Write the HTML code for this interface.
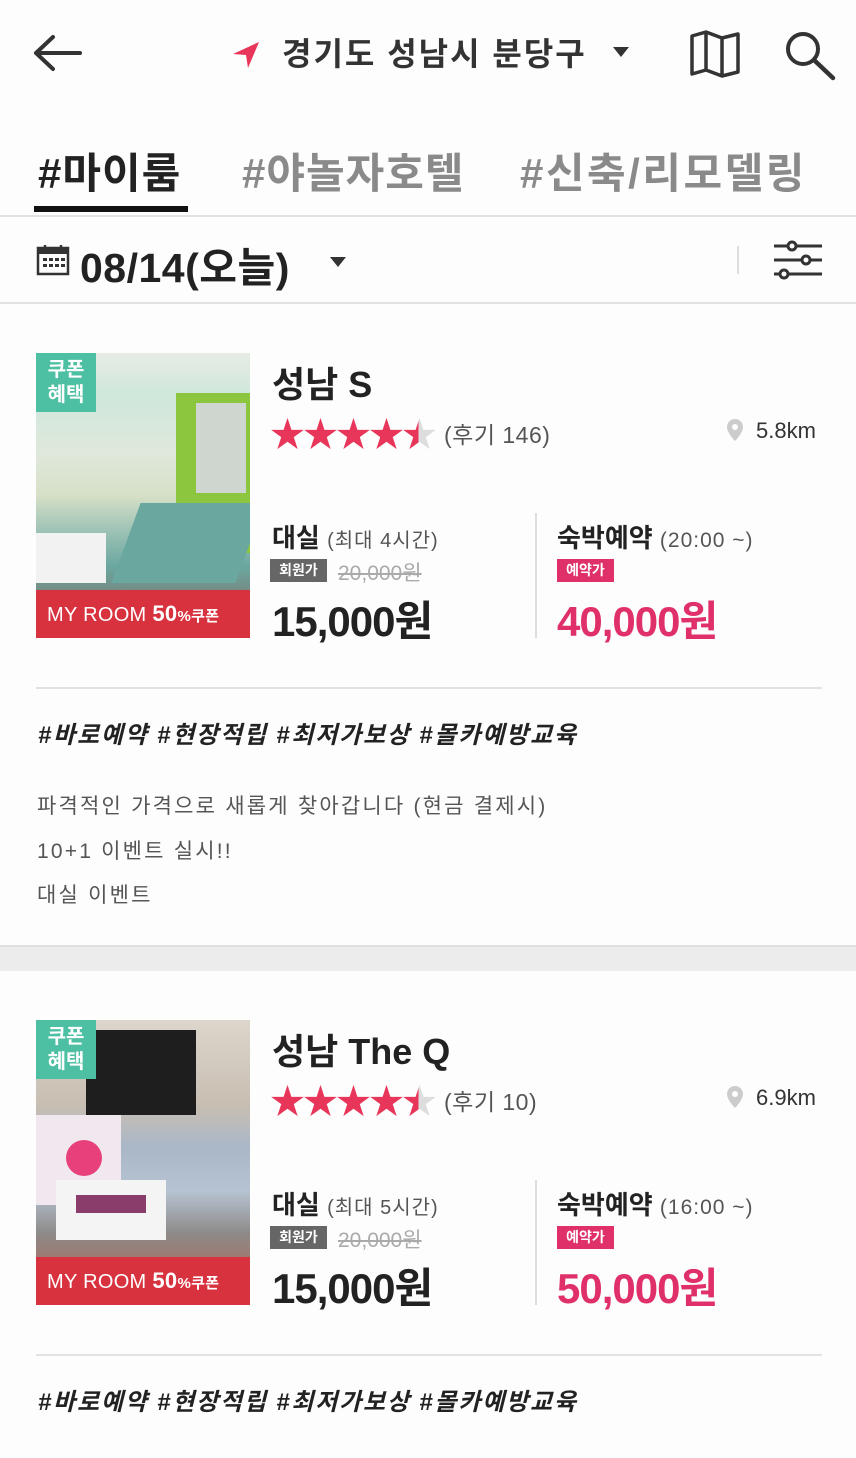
<!DOCTYPE html>
<html><head><meta charset="utf-8"><style>
*{margin:0;padding:0;box-sizing:border-box}
body{width:856px;height:1458px;overflow:hidden;background:#fdfdfd;font-family:"Liberation Sans","Noto Sans CJK KR",sans-serif;color:#222;position:relative}
.a{position:absolute;white-space:nowrap}
.hl{position:absolute;left:0;width:856px;height:2px;background:#e2e2e2}
.img{position:absolute;left:36px;width:214px;height:285px;overflow:hidden}
.cp{position:absolute;left:0;top:0;width:60px;height:59px;background:#4dbfa3;color:#fff;font-size:20px;font-weight:bold;line-height:25px;text-align:center;padding-top:5px}
.band{position:absolute;left:0;bottom:0;width:214px;height:48px;background:#d8323f;color:#fff;font-size:20px;line-height:48px;padding-left:11px;letter-spacing:.3px}
.band b{font-size:22px}
.band small{font-size:15px;font-weight:bold}
.name{font-size:36px;font-weight:bold;color:#222}
.stars{font-size:35px;color:#e8365a;letter-spacing:-2px}
.gray{color:#555}
.badge{position:absolute;height:23px;font-size:14px;font-weight:bold;color:#fff;line-height:23px;text-align:center;width:57px}
.tags{font-size:24px;font-weight:bold;font-style:italic;color:#222;letter-spacing:1.8px}
.desc{font-size:21px;color:#555;letter-spacing:2.2px}
.sub{font-size:20px;font-weight:normal;color:#555;letter-spacing:1px}
</style></head><body>

<!-- header -->
<svg class="a" style="left:33px;top:33px" width="50" height="40" viewBox="0 0 50 40"><path d="M3 20H47M3 20L20 4M3 20L20 36" stroke="#333" stroke-width="4" fill="none" stroke-linecap="round"/></svg>
<svg class="a" style="left:232px;top:40px" width="30" height="30" viewBox="0 0 30 30"><path d="M27 2L1 14 14 15 16 28Z" fill="#e8365a"/></svg>
<div class="a" style="left:282px;top:29px;font-size:32px;font-weight:bold;color:#333;letter-spacing:2px">경기도 성남시 분당구</div>
<svg class="a" style="left:612px;top:46px" width="18" height="12"><path d="M1 1H17L9 11Z" fill="#333"/></svg>
<svg class="a" style="left:688px;top:30px" width="54" height="48" viewBox="0 0 54 48"><path d="M4 6L18 2 34 8 50 4V42L34 46 18 40 4 44Z M18 2V40 M34 8V46" stroke="#333" stroke-width="3.5" fill="none" stroke-linejoin="round"/></svg>
<svg class="a" style="left:783px;top:29px" width="54" height="52" viewBox="0 0 54 52"><circle cx="20" cy="20" r="15" stroke="#333" stroke-width="4" fill="none"/><path d="M31 31L50 49" stroke="#333" stroke-width="4.5" stroke-linecap="round"/></svg>

<!-- tabs -->
<div class="a" style="left:38px;top:140px;font-size:42px;font-weight:bold;color:#222;letter-spacing:1px">#마이룸</div>
<div class="a" style="left:242px;top:140px;font-size:42px;font-weight:bold;color:#8a8a8a;letter-spacing:1px">#야놀자호텔</div>
<div class="a" style="left:520px;top:140px;font-size:42px;font-weight:bold;color:#8a8a8a;letter-spacing:2.5px">#신축/리모델링</div>
<div class="a" style="left:34px;top:206px;width:154px;height:6px;background:#111"></div>
<div class="hl" style="top:215px"></div>

<!-- date row -->
<svg class="a" style="left:36px;top:244px" width="34" height="32" viewBox="0 0 34 32"><rect x="2" y="4" width="30" height="26" fill="none" stroke="#333" stroke-width="2.5"/><rect x="2" y="4" width="30" height="6" fill="#333"/><path d="M9 1V7M25 1V7" stroke="#333" stroke-width="2.5"/><g fill="#333"><rect x="7" y="14" width="4" height="3"/><rect x="13" y="14" width="4" height="3"/><rect x="19" y="14" width="4" height="3"/><rect x="25" y="14" width="4" height="3"/><rect x="7" y="20" width="4" height="3"/><rect x="13" y="20" width="4" height="3"/><rect x="19" y="20" width="4" height="3"/><rect x="25" y="20" width="4" height="3"/></g></svg>
<div class="a" style="left:80px;top:234px;font-size:41px;font-weight:bold;color:#222;letter-spacing:0.5px">08/14(오늘)</div>
<svg class="a" style="left:329px;top:256px" width="18" height="12"><path d="M1 1H17L9 11Z" fill="#333"/></svg>
<div class="a" style="left:737px;top:246px;width:2px;height:28px;background:#ddd"></div>
<svg class="a" style="left:772px;top:238px" width="52" height="44" viewBox="0 0 52 44"><g stroke="#333" stroke-width="3" fill="#fdfdfd"><path d="M2 8H16M24 8H50M2 22H30M38 22H50M2 36H8M16 36H50"/><circle cx="20" cy="8" r="4"/><circle cx="34" cy="22" r="4"/><circle cx="12" cy="36" r="4"/></g></svg>
<div class="hl" style="top:302px"></div>

<!-- card 1 -->
<div class="img" style="top:353px;background:linear-gradient(180deg,#e7ece4 0%,#cfe7dc 15%,#dfe8dc 35%,#d6e0c6 50%,#9fc3b6 62%,#6aa79f 75%,#7a7f76 88%,#555 100%)">
 <div style="position:absolute;left:140px;top:40px;width:74px;height:160px;background:#8cc63f"></div>
 <div style="position:absolute;left:160px;top:50px;width:50px;height:90px;background:#cfd6cf"></div>
 <div style="position:absolute;left:90px;top:150px;width:124px;height:80px;background:#6aa79f;transform:skewX(-20deg)"></div>
 <div style="position:absolute;left:0;top:180px;width:70px;height:50px;background:#f2f2f2"></div>
 <div class="cp">쿠폰<br>혜택</div>
 <div class="band">MY ROOM <b>50</b><small>%쿠폰</small></div>
</div>
<div class="a name" style="left:272px;top:356px">성남 S</div>
<div class="a stars" style="left:270px;top:407px">★★★★<span style="background:linear-gradient(90deg,#e8365a 50%,#ddd 50%);-webkit-background-clip:text;color:transparent">★</span></div>
<div class="a gray" style="left:444px;top:416px;font-size:23px;letter-spacing:0.5px">(후기 146)</div>
<svg class="a" style="left:726px;top:418px" width="18" height="24" viewBox="0 0 18 24"><path d="M9 1C4 1 1 5 1 9C1 15 9 23 9 23S17 15 17 9C17 5 14 1 9 1Z" fill="#ccc"/><circle cx="9" cy="9" r="3" fill="#fff"/></svg>
<div class="a" style="left:756px;top:418px;font-size:22px;color:#333">5.8km</div>
<div class="a" style="left:272px;top:518px;font-size:26px;font-weight:bold">대실 <span class="sub">(최대 4시간)</span></div>
<div class="badge" style="left:270px;top:559px;background:#666">회원가</div>
<div class="a" style="left:338px;top:557px;font-size:21px;color:#aaa;text-decoration:line-through">20,000원</div>
<div class="a" style="left:272px;top:588px;font-size:42px;font-weight:bold;color:#222;letter-spacing:-1px">15,000원</div>
<div class="a" style="left:535px;top:513px;width:2px;height:125px;background:#ddd"></div>
<div class="a" style="left:557px;top:518px;font-size:26px;font-weight:bold">숙박예약 <span class="sub" style="font-size:21px">(20:00 ~)</span></div>
<div class="badge" style="left:557px;top:559px;background:#e0306a">예약가</div>
<div class="a" style="left:557px;top:588px;font-size:42px;font-weight:bold;color:#e0306a;letter-spacing:-1px">40,000원</div>
<div class="a" style="left:36px;top:687px;width:786px;height:2px;background:#e2e2e2"></div>
<div class="a tags" style="left:38px;top:715px">#바로예약 #현장적립 #최저가보상 #몰카예방교육</div>
<div class="a desc" style="left:37px;top:790px">파격적인 가격으로 새롭게 찾아갑니다 (현금 결제시)</div>
<div class="a desc" style="left:37px;top:835px">10+1 이벤트 실시!!</div>
<div class="a desc" style="left:37px;top:879px">대실 이벤트</div>
<div class="a" style="left:0;top:945px;width:856px;height:26px;background:#ececec;border-top:2px solid #e0e0e0"></div>

<!-- card 2 -->
<div class="img" style="top:1020px;background:linear-gradient(180deg,#ddd6cc 0%,#c8beb2 30%,#a9b7c8 45%,#b6c3d2 60%,#8d8a88 75%,#a67064 88%,#6a6060 100%)">
 <div style="position:absolute;left:50px;top:10px;width:110px;height:85px;background:#1e1e1e"></div>
 <div style="position:absolute;left:0;top:95px;width:85px;height:90px;background:#f0e8ee"></div>
 <div style="position:absolute;left:30px;top:120px;width:36px;height:36px;border-radius:50%;background:#e8407a"></div>
 <div style="position:absolute;left:20px;top:160px;width:110px;height:60px;background:#f4f4f4"></div>
 <div style="position:absolute;left:40px;top:175px;width:70px;height:18px;background:#8a3d6a"></div>
 <div class="cp">쿠폰<br>혜택</div>
 <div class="band">MY ROOM <b>50</b><small>%쿠폰</small></div>
</div>
<div class="a name" style="left:272px;top:1023px">성남 The Q</div>
<div class="a stars" style="left:270px;top:1074px">★★★★<span style="background:linear-gradient(90deg,#e8365a 50%,#ddd 50%);-webkit-background-clip:text;color:transparent">★</span></div>
<div class="a gray" style="left:444px;top:1083px;font-size:23px;letter-spacing:0.5px">(후기 10)</div>
<svg class="a" style="left:726px;top:1085px" width="18" height="24" viewBox="0 0 18 24"><path d="M9 1C4 1 1 5 1 9C1 15 9 23 9 23S17 15 17 9C17 5 14 1 9 1Z" fill="#ccc"/><circle cx="9" cy="9" r="3" fill="#fff"/></svg>
<div class="a" style="left:756px;top:1085px;font-size:22px;color:#333">6.9km</div>
<div class="a" style="left:272px;top:1185px;font-size:26px;font-weight:bold">대실 <span class="sub">(최대 5시간)</span></div>
<div class="badge" style="left:270px;top:1226px;background:#666">회원가</div>
<div class="a" style="left:338px;top:1224px;font-size:21px;color:#aaa;text-decoration:line-through">20,000원</div>
<div class="a" style="left:272px;top:1255px;font-size:42px;font-weight:bold;color:#222;letter-spacing:-1px">15,000원</div>
<div class="a" style="left:535px;top:1180px;width:2px;height:125px;background:#ddd"></div>
<div class="a" style="left:557px;top:1185px;font-size:26px;font-weight:bold">숙박예약 <span class="sub" style="font-size:21px">(16:00 ~)</span></div>
<div class="badge" style="left:557px;top:1226px;background:#e0306a">예약가</div>
<div class="a" style="left:557px;top:1255px;font-size:42px;font-weight:bold;color:#e0306a;letter-spacing:-1px">50,000원</div>
<div class="a" style="left:36px;top:1354px;width:786px;height:2px;background:#e2e2e2"></div>
<div class="a tags" style="left:38px;top:1382px">#바로예약 #현장적립 #최저가보상 #몰카예방교육</div>
</body></html>
